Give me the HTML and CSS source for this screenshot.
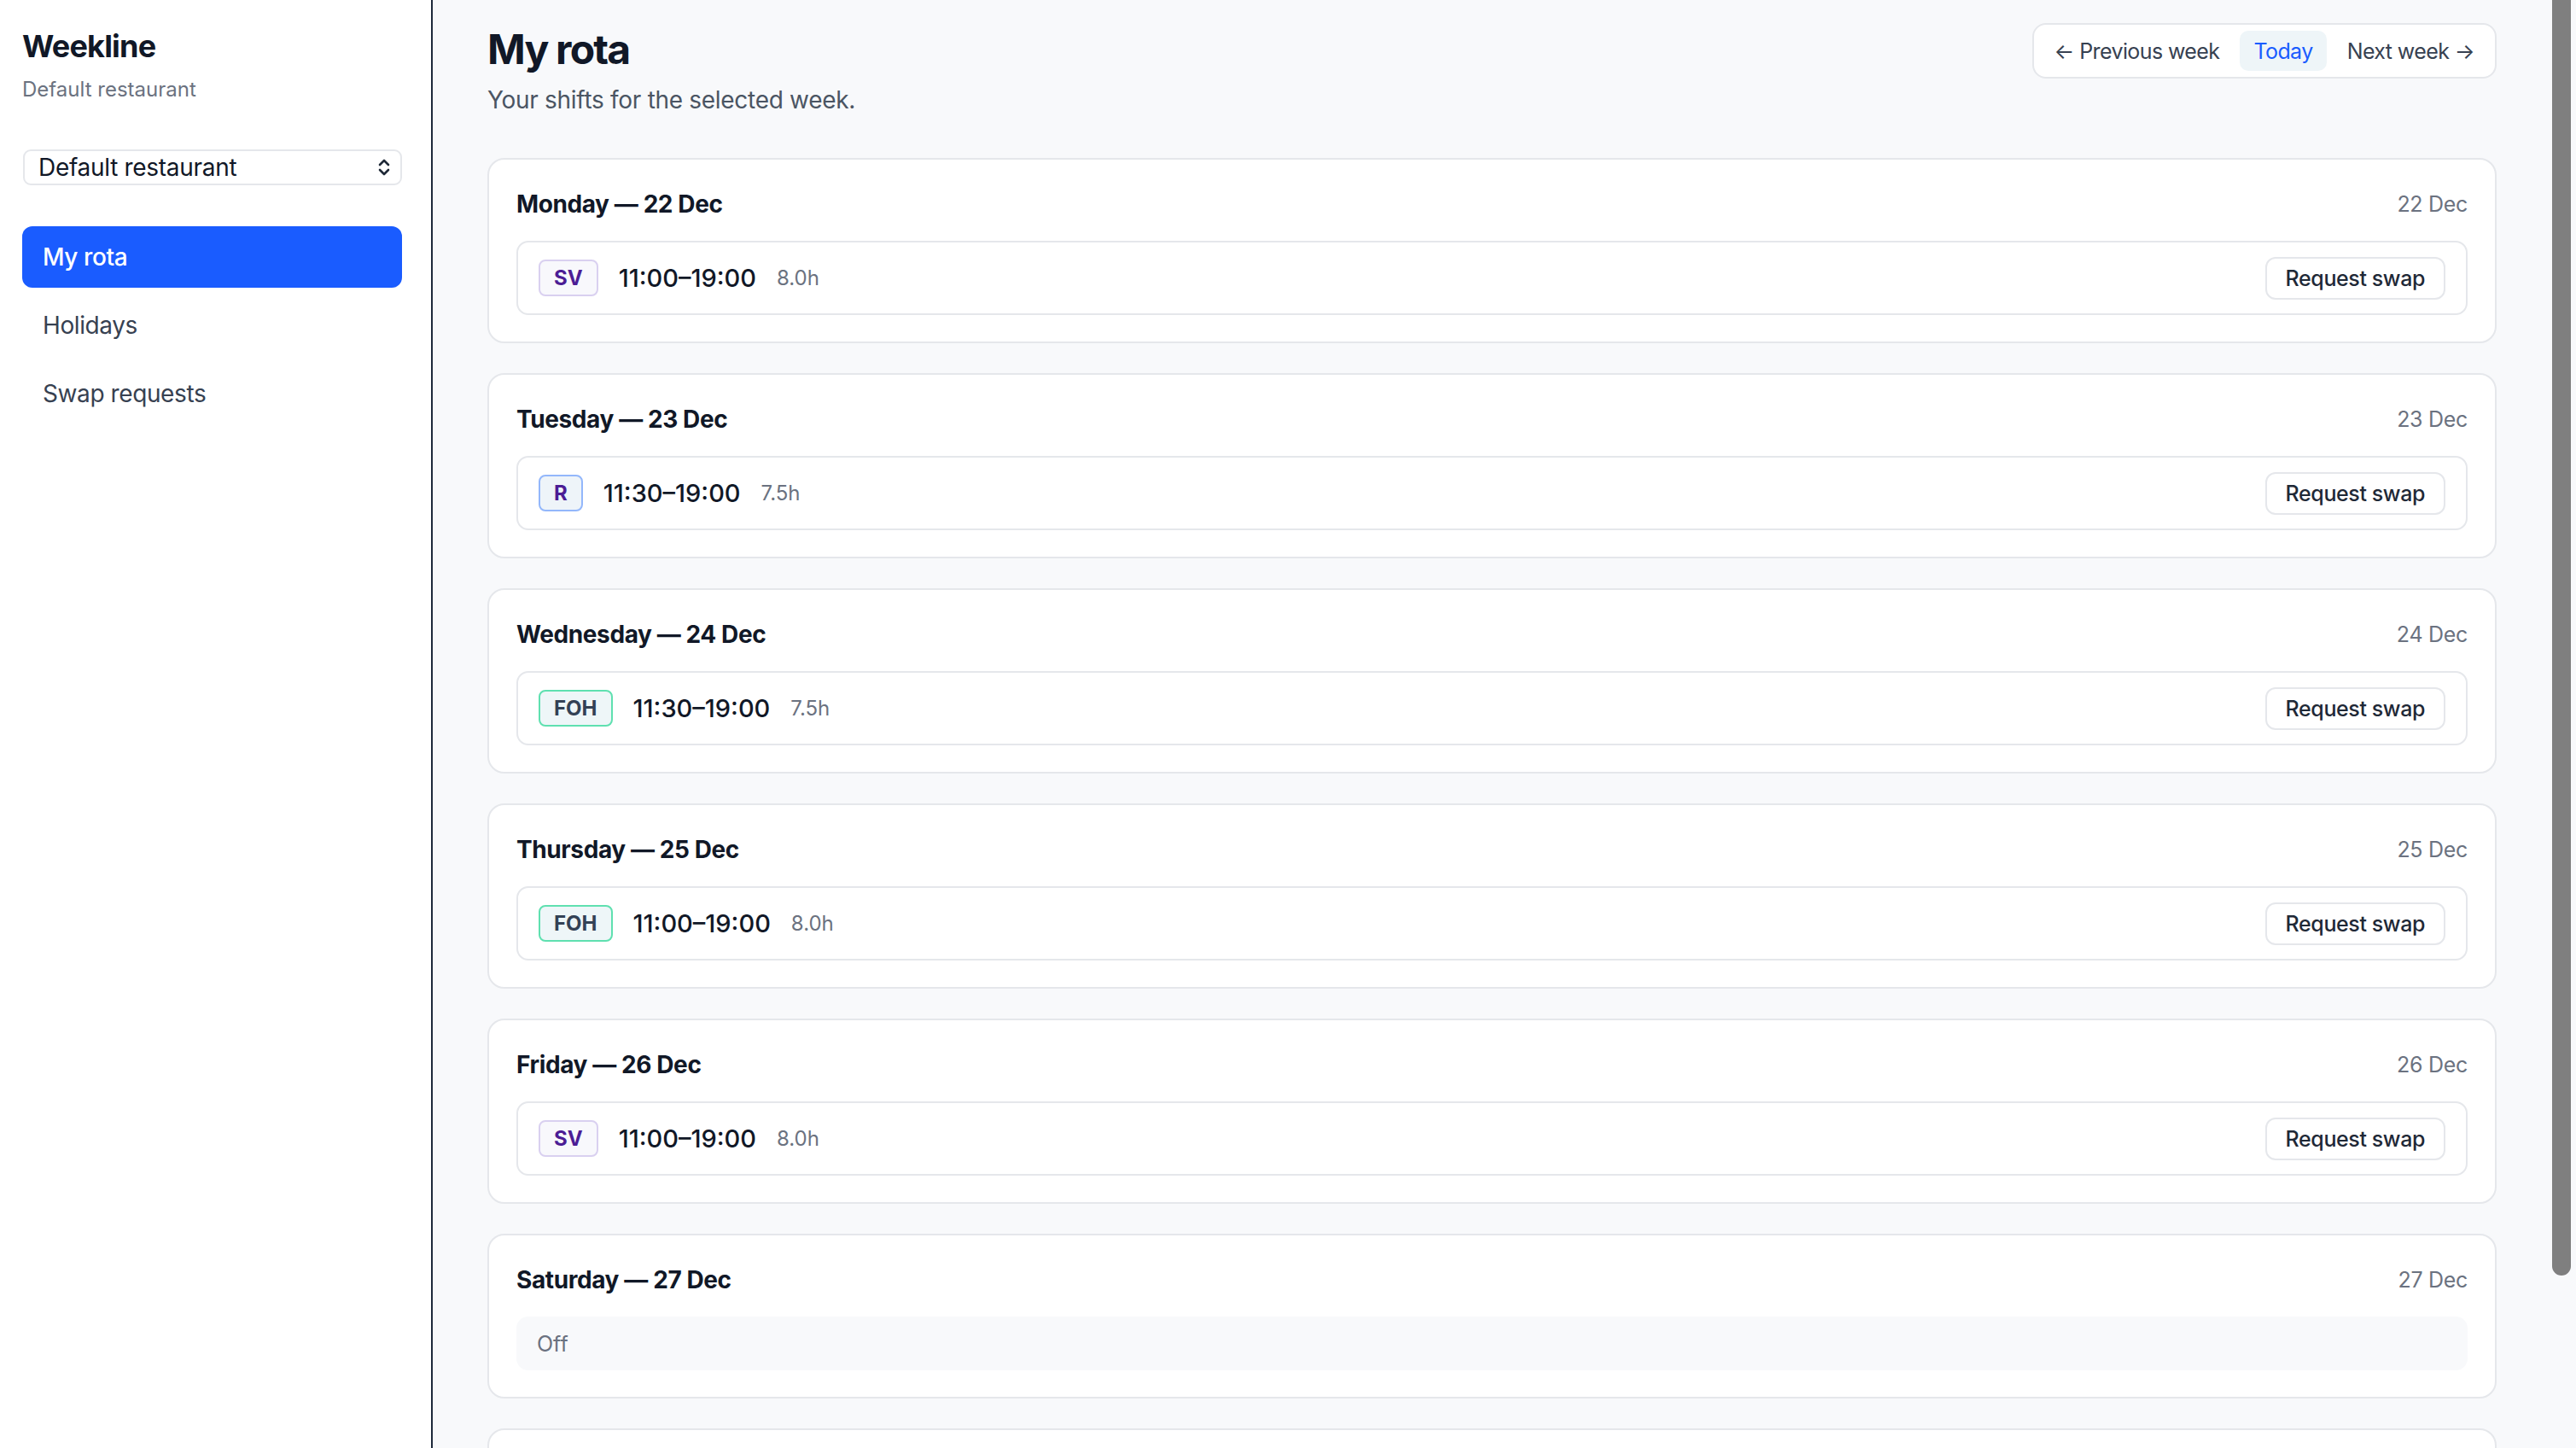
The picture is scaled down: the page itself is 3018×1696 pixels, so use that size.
FILE: index.html
```html
<!DOCTYPE html>
<html lang="en">
<head>
<meta charset="utf-8">
<title>Weekline — My rota</title>
<link rel="stylesheet" href="styles.css">
</head>
<body>
<div class="app">
  <aside class="sidebar">
    <div class="brand">Weekline</div>
    <div class="brand-sub">Default restaurant</div>
    <div class="select">
      <span>Default restaurant</span>
      <svg class="chev" width="14" height="22" viewBox="0 0 14 22" fill="none" stroke="#1f2937" stroke-width="2.6" stroke-linecap="round" stroke-linejoin="round"><path d="M2 8 L7 3 L12 8"/><path d="M2 14 L7 19 L12 14"/></svg>
    </div>
    <nav class="nav">
      <a class="nav-item active">My rota</a>
      <a class="nav-item">Holidays</a>
      <a class="nav-item">Swap requests</a>
    </nav>
  </aside>
  <main class="main">
    <header class="page-head">
      <div>
        <h1 class="page-title">My rota</h1>
        <p class="page-sub">Your shifts for the selected week.</p>
      </div>
      <div class="week-nav">
        <span class="wn-item">← Previous week</span>
        <span class="wn-item today">Today</span>
        <span class="wn-item">Next week →</span>
      </div>
    </header>

    <section class="days">
      <div class="day">
        <div class="day-head"><span class="day-name">Monday — 22 Dec</span><span class="day-date">22 Dec</span></div>
        <div class="shift">
          <span class="badge sv">SV</span>
          <span class="time">11:00–19:00</span>
          <span class="hours">8.0h</span>
          <button class="swap">Request swap</button>
        </div>
      </div>
      <div class="day">
        <div class="day-head"><span class="day-name">Tuesday — 23 Dec</span><span class="day-date">23 Dec</span></div>
        <div class="shift">
          <span class="badge r">R</span>
          <span class="time">11:30–19:00</span>
          <span class="hours">7.5h</span>
          <button class="swap">Request swap</button>
        </div>
      </div>
      <div class="day">
        <div class="day-head"><span class="day-name">Wednesday — 24 Dec</span><span class="day-date">24 Dec</span></div>
        <div class="shift">
          <span class="badge foh">FOH</span>
          <span class="time">11:30–19:00</span>
          <span class="hours">7.5h</span>
          <button class="swap">Request swap</button>
        </div>
      </div>
      <div class="day">
        <div class="day-head"><span class="day-name">Thursday — 25 Dec</span><span class="day-date">25 Dec</span></div>
        <div class="shift">
          <span class="badge foh">FOH</span>
          <span class="time">11:00–19:00</span>
          <span class="hours">8.0h</span>
          <button class="swap">Request swap</button>
        </div>
      </div>
      <div class="day">
        <div class="day-head"><span class="day-name">Friday — 26 Dec</span><span class="day-date">26 Dec</span></div>
        <div class="shift">
          <span class="badge sv">SV</span>
          <span class="time">11:00–19:00</span>
          <span class="hours">8.0h</span>
          <button class="swap">Request swap</button>
        </div>
      </div>
      <div class="day">
        <div class="day-head"><span class="day-name">Saturday — 27 Dec</span><span class="day-date">27 Dec</span></div>
        <div class="off">Off</div>
      </div>
      <div class="day">
        <div class="day-head"><span class="day-name">Sunday — 28 Dec</span><span class="day-date">28 Dec</span></div>
        <div class="off">Off</div>
      </div>
    </section>
  </main>
  <div class="gutter" aria-hidden="true"><div class="thumb"></div></div>
</div>
</body>
</html>
```

FILE: styles.css
```css
* { box-sizing: border-box; }

html, body {
  margin: 0;
  padding: 0;
  height: 100%;
  overflow: hidden;
}

body {
  font-family: Inter, "Noto Sans", "Liberation Sans", sans-serif;
  color: #111827;
  background: #f8f9fb;
}

.app {
  display: flex;
  height: 100vh;
}

.sidebar {
  width: 507px;
  flex: 0 0 507px;
  height: 100%;
  background: #ffffff;
  border-right: 2px solid #1e293b;
  padding: 32px 34px 32px 26px;
}

.brand {
  font-size: 36px;
  font-weight: 700;
  line-height: 44px;
  letter-spacing: -0.8px;
  color: #111827;
}

.brand-sub {
  margin-top: 13px;
  font-size: 24px;
  line-height: 32px;
  color: #6b7280;
}

.select {
  margin-top: 54px;
  margin-left: 1px;
  height: 42px;
  border: 2px solid #e5e7eb;
  border-radius: 9px;
  display: flex;
  align-items: center;
  justify-content: space-between;
  padding: 0 12px 0 16px;
  font-size: 28px;
  letter-spacing: -0.3px;
  color: #111827;
}

.chev { display: block; }

.nav {
  margin-top: 48px;
  display: flex;
  flex-direction: column;
  gap: 8px;
}

.nav-item {
  display: flex;
  align-items: center;
  height: 72px;
  padding: 0 24px;
  border-radius: 12px;
  font-size: 28px;
  letter-spacing: -0.4px;
  color: #374151;
}

.nav-item.active {
  background: #1a5cff;
  color: #ffffff;
  font-weight: 500;
}

.main {
  flex: 1;
  min-width: 0;
  height: 100%;
  overflow-y: auto;
  scrollbar-width: none;
  padding: 29px 65px 64px 64px;
}

.main::-webkit-scrollbar { display: none; }

.gutter {
  flex: 0 0 28px;
  height: 100%;
  padding-right: 6px;
  background: #f8f9fb;
}

.thumb {
  height: 1494px;
  background: #7f7f7f;
  border-radius: 0 0 11px 11px;
}

.page-head {
  display: flex;
  justify-content: space-between;
  align-items: flex-start;
}

.page-title {
  margin: 0;
  font-size: 48px;
  line-height: 58px;
  font-weight: 700;
  letter-spacing: -1.8px;
  color: #111827;
}

.page-sub {
  margin: 10px 0 0;
  font-size: 28px;
  line-height: 40px;
  letter-spacing: -0.3px;
  color: #4b5563;
}

.week-nav {
  margin-top: -2px;
  display: flex;
  align-items: center;
  gap: 8px;
  padding: 7px 8px;
  background: #ffffff;
  border: 2px solid #e5e7eb;
  border-radius: 16px;
}

.wn-item {
  display: flex;
  align-items: center;
  height: 47px;
  padding: 0 16px;
  border-radius: 10px;
  font-size: 25px;
  letter-spacing: -0.6px;
  color: #374151;
}

.wn-item.today {
  background: #eef5f8;
  color: #1a5cff;
}

.days {
  margin-top: 48px;
  display: flex;
  flex-direction: column;
  gap: 35px;
}

.day {
  background: #ffffff;
  border: 2px solid #e5e7eb;
  border-radius: 20px;
  padding: 32px 32px 31px;
}

.day-head {
  display: flex;
  justify-content: space-between;
  align-items: center;
  height: 40px;
  margin-bottom: 23px;
}

.day-name {
  font-size: 28px;
  font-weight: 700;
  letter-spacing: -0.4px;
  color: #111827;
}

.day-date {
  font-size: 25px;
  letter-spacing: -0.3px;
  color: #6b7280;
}

.shift {
  display: flex;
  align-items: center;
  gap: 24px;
  height: 87px;
  padding: 0 24px;
  border: 2px solid #e5e7eb;
  border-radius: 14px;
}

.badge {
  display: flex;
  align-items: center;
  height: 43px;
  padding: 0 16px;
  border: 2px solid;
  border-radius: 8px;
  font-size: 24px;
  font-weight: 700;
}

.badge.sv { border-color: #d9d0f0; background: #f8f8fc; color: #4c1d95; }
.badge.r { border-color: #93b7fb; background: #eef4f9; color: #4c1d95; }
.badge.foh { border-color: #5fe0b0; background: #eef6f8; color: #334155; }

.time {
  font-size: 29px;
  font-weight: 500;
  color: #111827;
}

.hours {
  font-size: 24px;
  color: #6b7280;
}

.swap {
  margin-left: auto;
  height: 50px;
  padding: 0 22px;
  background: #ffffff;
  border: 2px solid #e5e7eb;
  border-radius: 12px;
  font-family: inherit;
  font-size: 25px;
  font-weight: 500;
  letter-spacing: -0.4px;
  color: #1f2937;
}

.off {
  height: 63px;
  display: flex;
  align-items: center;
  padding: 0 24px;
  background: #f8f9fb;
  border-radius: 14px;
  font-size: 25px;
  color: #6b7280;
}
```
